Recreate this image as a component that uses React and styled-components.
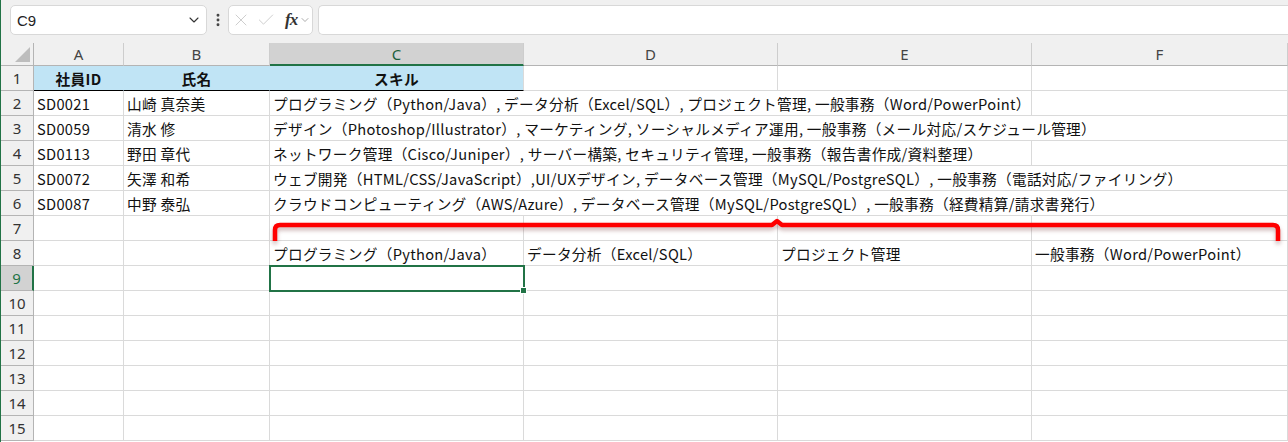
import React from 'react';
import styled, { createGlobalStyle } from 'styled-components';
import { ChevronDown, EllipsisVertical, X, Check } from 'lucide-react';

const GlobalStyle = createGlobalStyle`
  html, body {
    margin: 0;
    padding: 0;
    background: #ffffff;
  }
  body {
    font-family: "Noto Sans CJK JP", "Noto Sans", sans-serif;
  }
`;

const GRID = '#dadada';
const GREEN = '#217346';
const HEAD_BG = '#f0f0f0';
const HEAD_LINE = '#b4b4b4';

const Window = styled.div`
  width: 1288px;
  height: 442px;
  overflow: hidden;
  box-sizing: border-box;
  border-left: 1px solid ${GREEN};
  background: ${HEAD_BG};
  display: flex;
  flex-direction: column;
`;

const FormulaBar = styled.div`
  height: 43px;
  flex: none;
  box-sizing: border-box;
  display: flex;
  align-items: flex-start;
  padding: 5px 0 0 9px;
`;

const NameBox = styled.div`
  width: 197px;
  height: 30px;
  box-sizing: border-box;
  background: #ffffff;
  border: 1px solid #d8d8d8;
  border-radius: 5px;
  display: flex;
  align-items: center;
  justify-content: space-between;
  padding: 0 4px 0 6px;
  font-family: "Liberation Sans", Arial, sans-serif;
  font-size: 15px;
  color: #222;
`;

const DotsSlot = styled.div`
  width: 21px;
  height: 30px;
  display: flex;
  align-items: center;
  justify-content: center;
  color: #444;
`;

const FxGroup = styled.div`
  width: 85px;
  height: 30px;
  box-sizing: border-box;
  background: #ffffff;
  border: 1px solid #d8d8d8;
  border-radius: 5px;
  display: flex;
  align-items: center;
  padding-left: 2px;
  gap: 5px;
  color: #c4c4c4;
`;

const FxLabel = styled.span`
  font-family: "Liberation Serif", "Times New Roman", serif;
  font-style: italic;
  font-weight: 700;
  font-size: 17px;
  color: #333;
  margin-left: 4px;
  letter-spacing: -1px;
`;

const FxChevron = styled.span`
  display: flex;
  margin-left: -3px;
  color: #888;
`;

const FormulaInput = styled.div`
  flex: 1;
  height: 30px;
  margin-left: 5px;
  box-sizing: border-box;
  background: #ffffff;
  border: 1px solid #d8d8d8;
  border-right: none;
  border-radius: 5px 0 0 5px;
`;

const Sheet = styled.div`
  position: relative;
  flex: 1;
  display: grid;
  grid-template-columns: 33px 90px 146px 254px 254px 254px 256px;
  grid-template-rows: 23px repeat(15, 25px);
  background: #ffffff;
`;

const Corner = styled.div`
  position: relative;
  background: ${HEAD_BG};
  border-right: 1px solid ${HEAD_LINE};
  border-bottom: 1px solid ${HEAD_LINE};
  box-sizing: border-box;

  &::after {
    content: '';
    position: absolute;
    right: 3px;
    bottom: 3px;
    width: 0;
    height: 0;
    border-style: solid;
    border-width: 0 0 15px 15px;
    border-color: transparent transparent #bdbdbd transparent;
  }
`;

const ColHead = styled.div`
  box-sizing: border-box;
  display: flex;
  align-items: center;
  justify-content: center;
  background: ${p => (p.$active ? '#d2d2d2' : HEAD_BG)};
  border-right: 1px solid #cdcdcd;
  border-bottom: ${p => (p.$active ? `2px solid ${GREEN}` : `1px solid ${HEAD_LINE}`)};
  font-family: "Noto Sans", "Liberation Sans", sans-serif;
  font-size: 15px;
  color: ${p => (p.$active ? '#1d5e3a' : '#444')};
  padding-top: ${p => (p.$active ? '1px' : '0')};
`;

const RowHead = styled.div`
  box-sizing: border-box;
  display: flex;
  align-items: center;
  justify-content: center;
  background: ${p => (p.$active ? '#d2d2d2' : HEAD_BG)};
  border-right: ${p => (p.$active ? `2px solid ${GREEN}` : `1px solid ${HEAD_LINE}`)};
  border-bottom: 1px solid ${HEAD_LINE};
  font-family: "Noto Sans", "Liberation Sans", sans-serif;
  font-size: 15px;
  color: ${p => (p.$active ? GREEN : '#333')};
`;

const Cell = styled.div`
  grid-column: span ${p => p.$span || 1};
  box-sizing: border-box;
  min-width: 0;
  display: flex;
  align-items: center;
  justify-content: ${p => (p.$center ? 'center' : 'flex-start')};
  padding: 2px 3px 0 3px;
  background: ${p => p.$fill || '#ffffff'};
  border-right: 1px solid ${p => (p.$joined ? p.$fill : GRID)};
  border-bottom: 1px solid ${p => p.$edge || GRID};
  font-size: 14.67px;
  letter-spacing: 0.3px;
  font-weight: ${p => (p.$bold ? 700 : 400)};
  line-height: 1;
  color: #111;
  white-space: nowrap;
`;

const ActiveCell = styled(Cell)`
  position: relative;
  z-index: 1;
  outline: 2px solid ${GREEN};
  outline-offset: -1px;

  &::after {
    content: '';
    position: absolute;
    right: -4px;
    bottom: -4px;
    width: 5px;
    height: 5px;
    background: ${GREEN};
    border: 1px solid #ffffff;
  }
`;

const Bracket = styled.svg`
  position: absolute;
  left: 0;
  top: 0;
  width: 100%;
  height: 100%;
  pointer-events: none;
  overflow: visible;
  z-index: 2;
  filter: drop-shadow(0 3px 2px rgba(110, 40, 40, 0.35));
`;

const columns = ['A', 'B', 'C', 'D', 'E', 'F'];
const BLUE = '#c0e4f5';

const staff = [
  {
    id: 'SD0021',
    name: '山崎 真奈美',
    skill: 'プログラミング（Python/Java）, データ分析（Excel/SQL）, プロジェクト管理, 一般事務（Word/PowerPoint）',
    span: 3,
  },
  {
    id: 'SD0059',
    name: '清水 修',
    skill: 'デザイン（Photoshop/Illustrator）, マーケティング, ソーシャルメディア運用, 一般事務（メール対応/スケジュール管理）',
    span: 4,
  },
  {
    id: 'SD0113',
    name: '野田 章代',
    skill: 'ネットワーク管理（Cisco/Juniper）, サーバー構築, セキュリティ管理, 一般事務（報告書作成/資料整理）',
    span: 3,
  },
  {
    id: 'SD0072',
    name: '矢澤 和希',
    skill: 'ウェブ開発（HTML/CSS/JavaScript）,UI/UXデザイン, データベース管理（MySQL/PostgreSQL）, 一般事務（電話対応/ファイリング）',
    span: 4,
  },
  {
    id: 'SD0087',
    name: '中野 泰弘',
    skill: 'クラウドコンピューティング（AWS/Azure）, データベース管理（MySQL/PostgreSQL）, 一般事務（経費精算/請求書発行）',
    span: 4,
  },
];

const splitSkills = ['プログラミング（Python/Java）', 'データ分析（Excel/SQL）', 'プロジェクト管理', '一般事務（Word/PowerPoint）'];

const Empty = ({ count }) =>
  Array.from({ length: count }, (_, i) => <Cell key={`e${i}`} />);

export default function App() {
  return (
    <>
      <GlobalStyle />
      <Window>
        <FormulaBar>
          <NameBox>
            C9
            <ChevronDown size={16} strokeWidth={1.6} color="#333" />
          </NameBox>
          <DotsSlot>
            <EllipsisVertical size={16} strokeWidth={2.4} />
          </DotsSlot>
          <FxGroup>
            <X size={20} strokeWidth={1} />
            <Check size={20} strokeWidth={1} />
            <FxLabel>fx</FxLabel>
            <FxChevron>
              <ChevronDown size={12} strokeWidth={1.4} />
            </FxChevron>
          </FxGroup>
          <FormulaInput />
        </FormulaBar>

        <Sheet>
          <Corner />
          {columns.map(c => (
            <ColHead key={c} $active={c === 'C'}>{c}</ColHead>
          ))}

          <RowHead>1</RowHead>
          <Cell $center $bold $fill={BLUE} $joined $edge="#000">社員ID</Cell>
          <Cell $center $bold $fill={BLUE} $joined $edge="#000">氏名</Cell>
          <Cell $center $bold $fill={BLUE} $edge="#000">スキル</Cell>
          <Empty count={3} />

          {staff.map((s, i) => (
            <React.Fragment key={s.id}>
              <RowHead>{i + 2}</RowHead>
              <Cell>{s.id}</Cell>
              <Cell>{s.name}</Cell>
              <Cell $span={s.span}>{s.skill}</Cell>
              <Empty count={4 - s.span} />
            </React.Fragment>
          ))}

          <RowHead>7</RowHead>
          <Empty count={6} />

          <RowHead>8</RowHead>
          <Empty count={2} />
          {splitSkills.map(t => (
            <Cell key={t}>{t}</Cell>
          ))}

          <RowHead $active>9</RowHead>
          <Empty count={2} />
          <ActiveCell />
          <Empty count={3} />

          {[10, 11, 12, 13, 14, 15].map(n => (
            <React.Fragment key={n}>
              <RowHead>{n}</RowHead>
              <Empty count={6} />
            </React.Fragment>
          ))}

          <Bracket>
            <path
              d="M274 198 V187 Q274 182 279 182 H771 L776 178 L781 182 H1272 Q1277 182 1277 187 V198"
              fill="none"
              stroke="#ff0000"
              strokeWidth="4.5"
              strokeLinejoin="round"
            />
          </Bracket>
        </Sheet>
      </Window>
    </>
  );
}
